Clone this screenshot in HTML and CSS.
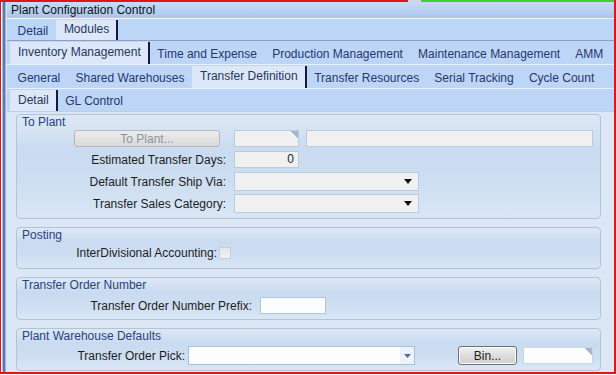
FILE: index.html
```html
<!DOCTYPE html>
<html lang="en">
<head>
    <meta charset="UTF-8">
    <title>Plant Configuration Control</title>
    <link rel="stylesheet" href="styles.css">
</head>
<body>
    <div class="frame">
        <div class="topline"><span class="red"></span><span class="gap"></span><span class="green"></span></div>
        <div class="window">
            <div class="stripe"></div>
            <div class="main">
                <div class="titlebar">Plant Configuration Control</div>

                <div class="tabs tabs-top">
                    <div class="tab">Detail</div>
                    <div class="tab active">Modules</div>
                </div>
                <div class="tabs">
                    <div class="tab active">Inventory Management</div>
                    <div class="tab">Time and Expense</div>
                    <div class="tab">Production Management</div>
                    <div class="tab">Maintenance Management</div>
                    <div class="tab">AMM</div>
                </div>
                <div class="tabs">
                    <div class="tab">General</div>
                    <div class="tab">Shared Warehouses</div>
                    <div class="tab active">Transfer Definition</div>
                    <div class="tab">Transfer Resources</div>
                    <div class="tab">Serial Tracking</div>
                    <div class="tab">Cycle Count</div>
                </div>
                <div class="tabs tabs-last">
                    <div class="tab active">Detail</div>
                    <div class="tab">GL Control</div>
                </div>

                <div class="content">
                    <div class="group group-plant">
                        <div class="group-title">To Plant</div>
                        <div class="row row-first">
                            <div class="label"><div class="btn btn-disabled">To Plant...</div></div>
                            <div class="field field-small corner"></div>
                            <div class="field field-long"></div>
                        </div>
                        <div class="row">
                            <div class="label">Estimated Transfer Days:</div>
                            <div class="field field-small number">0</div>
                        </div>
                        <div class="row row-combo">
                            <div class="label">Default Transfer Ship Via:</div>
                            <div class="field combo">
                                <svg width="8" height="5" viewBox="0 0 8 5"><path d="M0 0h8L4 5z" fill="#111"/></svg>
                            </div>
                        </div>
                        <div class="row row-combo">
                            <div class="label">Transfer Sales Category:</div>
                            <div class="field combo">
                                <svg width="8" height="5" viewBox="0 0 8 5"><path d="M0 0h8L4 5z" fill="#111"/></svg>
                            </div>
                        </div>
                    </div>

                    <div class="group group-posting">
                        <div class="group-title">Posting</div>
                        <div class="row">
                            <div class="label">InterDivisional Accounting:</div>
                            <div class="checkbox"></div>
                        </div>
                    </div>

                    <div class="group group-order">
                        <div class="group-title">Transfer Order Number</div>
                        <div class="row">
                            <div class="label">Transfer Order Number Prefix:</div>
                            <div class="field field-prefix"></div>
                        </div>
                    </div>

                    <div class="group group-defaults">
                        <div class="group-title">Plant Warehouse Defaults</div>
                        <div class="row row-combo">
                            <div class="label">Transfer Order Pick:</div>
                            <div class="field combo combo-white">
                                <span class="drop">
                                    <svg width="7" height="4" viewBox="0 0 7 4"><path d="M0 0h7L3.5 4z" fill="#4b6fa6"/></svg>
                                </span>
                            </div>
                            <div class="btn btn-bin">Bin...</div>
                            <div class="field field-bin corner"></div>
                        </div>
                    </div>
                </div>
            </div>
        </div>
    </div>
</body>
</html>
```

FILE: styles.css
```css
body {
    margin: 0;
    background: #fff;
    font-family: "Liberation Sans", Arial, sans-serif;
    font-size: 12px;
    color: #1c1c1c;
}
.frame {
    width: 616px;
    height: 374px;
    box-sizing: border-box;
    border-left: 1px solid #e31414;
    border-right: 2px solid #e31414;
    border-bottom: 2px solid #e31414;
    display: flex;
    flex-direction: column;
    overflow: hidden;
}
.topline {
    display: flex;
    height: 2px;
}
.topline .red {
    width: 407px;
    background: #e31414;
}
.topline .gap {
    width: 13px;
    background: #c9d9ef;
}
.topline .green {
    flex: 1;
    background: #3ed12b;
}
.window {
    flex: 1;
    display: flex;
}
.stripe {
    width: 6px;
    background: linear-gradient(to right, #fff 0 1px, #a4bbe0 1px 2px, #5c79b1 2px 4px, #9fb6dc 4px 5px, #d6e2f2 5px);
}
.main {
    flex: 1;
    min-width: 0;
    display: flex;
    flex-direction: column;
}
.titlebar {
    height: 16px;
    line-height: 16px;
    padding-left: 4px;
    color: #111;
    background: linear-gradient(#c8dbf5, #a9c5ee);
    border-bottom: 1px solid #f4f8fd;
}
.tabs {
    display: flex;
    height: 23px;
    padding-left: 3px;
    background: #bdd6f8;
    border-bottom: 1px solid #e9f1fc;
}
.tabs-top {
    height: 21px;
    border-bottom: 1px solid #8e9fb7;
}
.tabs-last {
    height: 22px;
    border-bottom: 1px solid #c2cedd;
}
.tab {
    display: flex;
    align-items: center;
    padding: 2px 7.6px 0;
    color: #24376f;
    white-space: nowrap;
}
.tab.active {
    margin-top: 1px;
    padding: 0 7px 2px 8px;
    background: #dce8f9;
    border-right: 2px solid #101b3e;
    color: #26365e;
}
.content {
    flex: 1;
    display: flex;
    flex-direction: column;
    gap: 8px;
    padding: 2px 13px 0 9px;
    background: #dce7f5;
}
.group {
    border: 1px solid #b4c4d8;
    border-radius: 4px;
    background: linear-gradient(#dde8f5, #c9dbf0 35%, #cfdff2 70%, #d9e7f5);
    padding-bottom: 5px;
}
.group-title {
    height: 15px;
    line-height: 15px;
    padding-left: 5px;
    color: #28437f;
}
.row {
    display: flex;
    align-items: center;
    height: 17px;
    margin-top: 4px;
}
.row-first {
    margin-top: 0;
}
.row-combo {
    height: 19px;
}
.label {
    flex: none;
    display: flex;
    justify-content: flex-end;
    align-items: center;
    margin-right: 8px;
    white-space: nowrap;
}
.group-plant .label {
    width: 209px;
}
.group-plant .row-combo + .row-combo {
    margin-top: 3px;
}
.group-posting .label {
    width: 200px;
    margin-right: 2px;
}
.group-posting .row {
    height: 16px;
    margin-top: 2px;
    padding-bottom: 2px;
}
.group-order .label {
    width: 235px;
}
.group-defaults .label {
    width: 168px;
    margin-right: 3px;
}
.group-defaults .row {
    margin-top: 2px;
}
.field {
    box-sizing: border-box;
    height: 100%;
    border: 1px solid #b8cbe3;
    background: #f0f0f0;
}
.field-small {
    width: 65px;
}
.field-long {
    width: 287px;
    margin-left: 7px;
}
.corner {
    background: linear-gradient(225deg, #a6b5c8 0 5px, transparent 5px), #f0f0f0;
}
.number {
    text-align: right;
    padding-right: 4px;
    line-height: 15px;
}
.combo {
    width: 185px;
    display: flex;
    justify-content: flex-end;
    align-items: center;
    padding-right: 6px;
}
.combo-white {
    width: 227px;
    padding-right: 0;
    background: #fcfdfe;
    border-color: #aabfd9;
}
.combo-white .drop {
    width: 14px;
    height: 100%;
    display: flex;
    align-items: center;
    justify-content: center;
    background: #eef3f9;
}
.checkbox {
    width: 12px;
    height: 12px;
    box-sizing: border-box;
    border: 1px solid #c7ced7;
    background: linear-gradient(#e2e7ec, #eef1f4);
}
.field-prefix {
    width: 66px;
    background: #fbfcfd;
    border-color: #b0c4dc;
}
.btn {
    box-sizing: border-box;
    height: 17px;
    display: flex;
    align-items: center;
    justify-content: center;
    border-radius: 3px;
}
.btn-disabled {
    width: 146px;
    margin-right: 6px;
    color: #8e949b;
    border: 1px solid #b4b9c0;
    background: linear-gradient(#ececec, #d9d9d9);
}
.btn-bin {
    width: 59px;
    height: 19px;
    margin-left: 43px;
    color: #1e1e1e;
    border: 1px solid #6f6f6f;
    box-shadow: inset 0 0 0 1px #fbfbfb;
    background: linear-gradient(#f3f3f3, #dcdcdc 50%, #d0d0d0);
}
.field-bin {
    width: 70px;
    height: 17px;
    margin-left: 6px;
    border-color: #c7d5e6;
    background: linear-gradient(225deg, #a6b5c8 0 5px, transparent 5px), #fdfdfe;
}
```
